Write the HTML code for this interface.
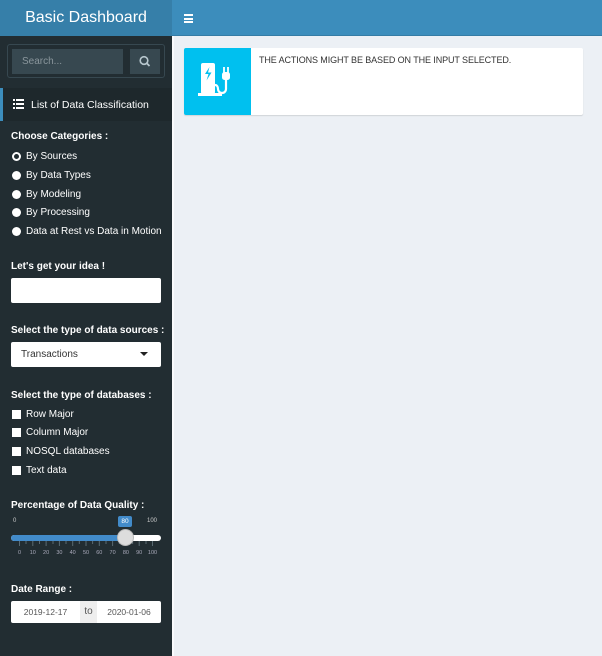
<!DOCTYPE html>
<html><head><meta charset="utf-8"><style>
*{box-sizing:border-box;margin:0;padding:0}
body{width:602px;height:656px;overflow:hidden;background:#ecf0f5;font-family:"Liberation Sans",sans-serif;position:relative;font-size:10px}
.abs{position:absolute}
#logo{left:0;top:0;width:172px;height:36px;background:#367fa9;color:#fff;font-size:16px;text-align:center;line-height:36px}
#nav{left:172px;top:0;right:0;height:36px;background:#3c8dbc;border-bottom:1px solid #357ca5}
#side{left:0;top:36px;width:172px;height:620px;background:#222d32;color:#fff}
.lbl{font-weight:bold;font-size:10px;color:#fff}
.opt{font-size:10px;color:#fff;left:26px}
.rad{width:9px;height:9px;border-radius:50%;background:#fff;left:12px}
.chk{width:9px;height:9px;background:#fff;left:12px}
.inp{background:#fff;border-radius:2px;left:11px;width:150px}
</style></head><body>
<div id="logo" class="abs">Basic Dashboard</div>
<div id="nav" class="abs"><div class="abs" style="left:12px;top:14px;width:9px">
<div style="height:2px;background:#fff;margin-bottom:1.5px"></div><div style="height:2px;background:#fff;margin-bottom:1.5px"></div><div style="height:2px;background:#fff"></div></div></div>
<div id="side" class="abs">
<div class="abs" style="left:7px;top:8px;width:158px;height:34px;border:1px solid #374850;border-radius:3px"></div>
<div class="abs" style="left:12px;top:13px;width:111px;height:25px;background:#374850;color:#8a969c;font-size:10px;line-height:25px;padding-left:10px">Search...</div>
<div class="abs" style="left:130px;top:13px;width:30px;height:25px;background:#374850"><svg width="30" height="25"><circle cx="14" cy="11.5" r="3.8" fill="none" stroke="#b8c7ce" stroke-width="1.6"/><line x1="17" y1="14.5" x2="19.5" y2="17" stroke="#b8c7ce" stroke-width="1.8"/></svg></div>
<div class="abs" style="left:0;top:52px;width:172px;height:33px;background:#1e282c;border-left:3px solid #3c8dbc"></div>
<svg class="abs" style="left:13px;top:63px" width="11" height="10"><g fill="#fff"><rect x="0" y="0" width="2" height="2"/><rect x="3" y="0" width="8" height="2"/><rect x="0" y="4" width="2" height="2"/><rect x="3" y="4" width="8" height="2"/><rect x="0" y="8" width="2" height="2"/><rect x="3" y="8" width="8" height="2"/></g></svg>
<div class="abs" style="left:31px;top:63px;font-size:10.5px;color:#fff">List of Data Classification</div>
<div class="abs lbl" style="left:11px;top:95px">Choose Categories :</div>
<div class="abs rad" style="top:116px;background:#222d32;border:2px solid #fff"></div><div class="abs opt" style="top:115px">By Sources</div>
<div class="abs rad" style="top:135px"></div><div class="abs opt" style="top:134px">By Data Types</div>
<div class="abs rad" style="top:154px"></div><div class="abs opt" style="top:153px">By Modeling</div>
<div class="abs rad" style="top:172px"></div><div class="abs opt" style="top:171px">By Processing</div>
<div class="abs rad" style="top:191px"></div><div class="abs opt" style="top:190px">Data at Rest vs Data in Motion</div>
<div class="abs lbl" style="left:11px;top:225px">Let's get your idea !</div>
<div class="abs inp" style="top:242px;height:25px"></div>
<div class="abs lbl" style="left:11px;top:289px">Select the type of data sources :</div>
<div class="abs inp" style="top:306px;height:25px;color:#333;font-size:10px;line-height:25px;padding-left:10px">Transactions</div>
<div class="abs" style="left:140px;top:316px;width:0;height:0;border-left:4px solid transparent;border-right:4px solid transparent;border-top:4px solid #222"></div>
<div class="abs lbl" style="left:11px;top:354px">Select the type of databases :</div>
<div class="abs chk" style="top:374px"></div><div class="abs opt" style="top:373px">Row Major</div>
<div class="abs chk" style="top:392px"></div><div class="abs opt" style="top:391px">Column Major</div>
<div class="abs chk" style="top:411px"></div><div class="abs opt" style="top:410px">NOSQL databases</div>
<div class="abs chk" style="top:430px"></div><div class="abs opt" style="top:429px">Text data</div>
<div class="abs lbl" style="left:11px;top:464px">Percentage of Data Quality :</div>
<div class="abs" style="left:13px;top:482px;font-size:6px;color:#ccc">0</div>
<div class="abs" style="left:147px;top:482px;font-size:6px;color:#ccc">100</div>
<div class="abs" style="left:118px;top:480px;width:14px;height:11px;background:#428bca;border-radius:2px;font-size:6.5px;color:#fff;text-align:center;line-height:11px">80</div>
<div class="abs" style="left:11px;top:499px;width:150px;height:6px;background:#fff;border-radius:3px"></div>
<div class="abs" style="left:11px;top:499px;width:114px;height:6px;background:#428bca;border-radius:3px 0 0 3px"></div>
<svg class="abs" style="left:0;top:505px" width="172" height="20">
<g stroke="#5a6a72" stroke-width="1">
<line x1="19.5" y1="0" x2="19.5" y2="5"/><line x1="32.8" y1="0" x2="32.8" y2="5"/><line x1="46.1" y1="0" x2="46.1" y2="5"/><line x1="59.4" y1="0" x2="59.4" y2="5"/><line x1="72.7" y1="0" x2="72.7" y2="5"/><line x1="86" y1="0" x2="86" y2="5"/><line x1="99.3" y1="0" x2="99.3" y2="5"/><line x1="112.6" y1="0" x2="112.6" y2="5"/><line x1="125.9" y1="0" x2="125.9" y2="5"/><line x1="139.2" y1="0" x2="139.2" y2="5"/><line x1="152.5" y1="0" x2="152.5" y2="5"/>
<line x1="26" y1="0" x2="26" y2="3"/><line x1="39.5" y1="0" x2="39.5" y2="3"/><line x1="53" y1="0" x2="53" y2="3"/><line x1="66" y1="0" x2="66" y2="3"/><line x1="79.3" y1="0" x2="79.3" y2="3"/><line x1="92.6" y1="0" x2="92.6" y2="3"/><line x1="106" y1="0" x2="106" y2="3"/><line x1="119.3" y1="0" x2="119.3" y2="3"/><line x1="132.6" y1="0" x2="132.6" y2="3"/><line x1="146" y1="0" x2="146" y2="3"/>
</g>
<g fill="#aab" font-size="5.5" font-family="Liberation Sans" text-anchor="middle">
<text x="19.5" y="13">0</text><text x="32.8" y="13">10</text><text x="46.1" y="13">20</text><text x="59.4" y="13">30</text><text x="72.7" y="13">40</text><text x="86" y="13">50</text><text x="99.3" y="13">60</text><text x="112.6" y="13">70</text><text x="125.9" y="13">80</text><text x="139.2" y="13">90</text><text x="152.5" y="13">100</text></g></svg>
<div class="abs" style="left:117px;top:493px;width:17px;height:17px;border-radius:50%;background:#ddd;border:1px solid #bbb"></div>
<div class="abs lbl" style="left:11px;top:548px">Date Range :</div>
<div class="abs" style="left:11px;top:565px;width:150px;height:22px;background:#fff;border-radius:2px;font-size:8.5px;color:#555;line-height:22px">
<span class="abs" style="left:0;width:69px;text-align:center">2019-12-17</span>
<span class="abs" style="left:69px;width:17px;height:22px;text-align:center;background:#eee;font-size:10px">to</span>
<span class="abs" style="left:86px;width:64px;text-align:center">2020-01-06</span></div>
</div>
<div class="abs" style="left:172px;top:36px;width:2px;height:620px;background:#f9fafc"></div>
<div class="abs" style="left:184px;top:48px;width:399px;height:67px;background:#fff;border-radius:2px;box-shadow:0 1px 1px rgba(0,0,0,.12)">
<div class="abs" style="left:0;top:0;width:67px;height:67px;background:#00c0ef;border-radius:2px 0 0 2px">
<svg width="67" height="67">
<rect x="17" y="15" width="14" height="31" rx="2" fill="#fff"/>
<path d="M25.5 19l-4.5 7h3.5l-2 6.5 5-8h-3.5z" fill="#00c0ef"/>
<rect x="14" y="45" width="24" height="3" fill="#fff"/>
<path d="M31 37c2 0 3 2 3 4s1.5 4 4 4 4-2 4-4v-10" fill="none" stroke="#fff" stroke-width="2.2"/>
<rect x="38" y="24" width="8" height="8" rx="2.5" fill="#fff"/>
<path d="M40 19v6M44 19v6" stroke="#fff" stroke-width="1.8"/>
</svg></div>
<div class="abs" style="left:75px;top:7px;font-size:9px;color:#333;letter-spacing:-0.1px">THE ACTIONS MIGHT BE BASED ON THE INPUT SELECTED.</div>
</div>
</body></html>
